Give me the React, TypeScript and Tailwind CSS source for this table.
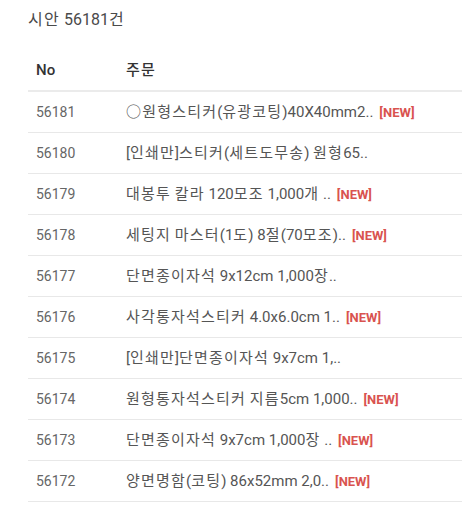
const rows: { no: number; title: string; isNew: boolean }[] = [
  { no: 56181, title: '○원형스티커(유광코팅)40X40mm2..', isNew: true },
  { no: 56180, title: '[인쇄만]스티커(세트도무송) 원형65..', isNew: false },
  { no: 56179, title: '대봉투 칼라 120모조 1,000개 ..', isNew: true },
  { no: 56178, title: '세팅지 마스터(1도) 8절(70모조)..', isNew: true },
  { no: 56177, title: '단면종이자석 9x12cm 1,000장..', isNew: false },
  { no: 56176, title: '사각통자석스티커 4.0x6.0cm 1..', isNew: true },
  { no: 56175, title: '[인쇄만]단면종이자석 9x7cm 1,..', isNew: false },
  { no: 56174, title: '원형통자석스티커 지름5cm 1,000..', isNew: true },
  { no: 56173, title: '단면종이자석 9x7cm 1,000장 ..', isNew: true },
  { no: 56172, title: '양면명함(코팅) 86x52mm 2,0..', isNew: true },
];

const font = { fontFamily: 'Roboto, "Noto Sans CJK KR", sans-serif' };

// hangul in the reference is set full-width, Noto's is a bit narrower
function Ko({ text }: { text: string }) {
  const parts = text.split(/([\uAC00-\uD7A3○]+)/);
  return (
    <>
      {parts.map((p, i) =>
        /[\uAC00-\uD7A3○]/.test(p) ? (
          <span key={i} className="tracking-[0.08em]">{p}</span>
        ) : (
          <span key={i}>{p}</span>
        )
      )}
    </>
  );
}

export default function App() {
  return (
    <div className="w-[462px] h-[521px] bg-white overflow-hidden pl-[28px]" style={font}>
      <h2 className="pt-[9px] text-[16px] leading-[22px] text-[#4a4a4a] font-normal">
        <Ko text="시안 56181건" />
      </h2>

      <div className="mt-[19px] w-[434px]">
        {/* header */}
        <div className="flex h-[42px] items-center border-b-2 border-[#ebebeb] text-[15px] font-medium text-[#333]">
          <div className="w-[90px] shrink-0 pl-[8px]">No</div>
          <div className="pl-[8px]">
            <Ko text="주문" />
          </div>
        </div>

        {rows.map((r) => (
          <div key={r.no} className="flex h-[41px] items-center border-b border-[#e8e8e8]">
            <div className="w-[90px] shrink-0 pl-[8px] text-[14px] text-[#666]">{r.no}</div>
            <div className="pl-[8px] text-[15px] text-[#555] whitespace-nowrap">
              <Ko text={r.title} />
              {r.isNew && (
                <span
                  className="ml-[6px] text-[13px] font-bold text-[#d9534f]"
                  style={{ fontFamily: '"Liberation Sans Narrow", "Roboto", sans-serif' }}
                >
                  [NEW]
                </span>
              )}
            </div>
          </div>
        ))}
      </div>
    </div>
  );
}
